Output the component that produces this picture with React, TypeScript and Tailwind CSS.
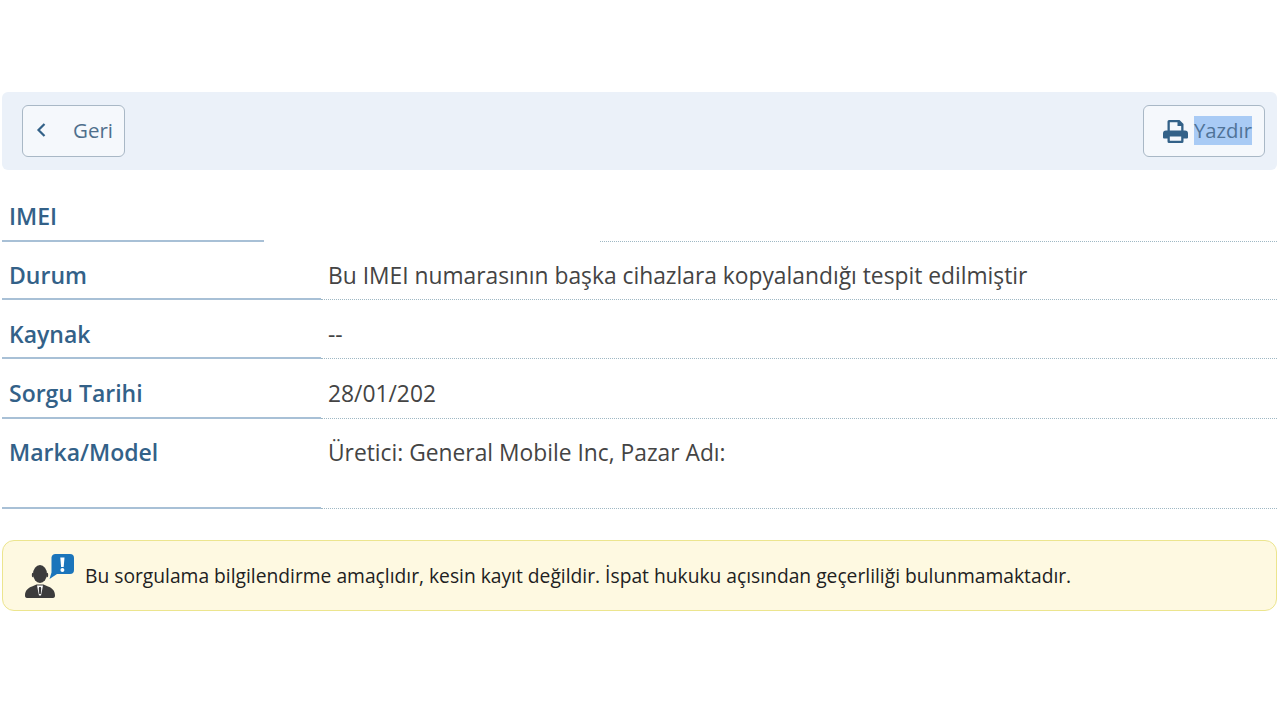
const rows = [
    { label: "Durum", value: "Bu IMEI numarasının başka cihazlara kopyalandığı tespit edilmiştir", box: "h-[58px] pt-[17px]" },
    { label: "Kaynak", value: "--", box: "h-[59px] pt-[18px]" },
    { label: "Sorgu Tarihi", value: "28/01/202", box: "h-[60px] pt-[18px]" },
    { label: "Marka/Model", value: "Üretici: General Mobile Inc, Pazar Adı:", box: "h-[90px] pt-[17px]" },
];

function PrinterIcon() {
    return (
        <svg width="25" height="23" viewBox="0 0 25 23" className="text-[#336188]">
            <path fill="currentColor" fillRule="evenodd" d="M6 0h10.500L20.500 4V10.500H22A3 3 0 0 1 25 13.500V17.500a1 1 0 0 1-1 1H20.500V21.500a1.500 1.500 0 0 1-1.500 1.500H6a1.500 1.500 0 0 1-1.500-1.500V18.500H1a1 1 0 0 1-1-1V13.500A3 3 0 0 1 3 10.500H4.500V1.500A1.500 1.500 0 0 1 6 0zM6.800 2.200V10.500H18.200V6H14.500V2.200zM6.800 16.500V20.800H18.200V16.500z" />
        </svg>
    );
}

function AgentIcon() {
    return (
        <svg width="50" height="46" viewBox="0 0 50 46">
            <path fill="#1b75bb" d="M26.500 4.500A4 4 0 0 1 30.500 1H45a4 4 0 0 1 4 4v12a4 4 0 0 1-4 4H32l-7.500 5 2-6.500z" />
            <path fill="#fff" d="M35.300 4.500h4.200l-.8 9.500h-2.600z" />
            <circle cx="37.400" cy="17" r="2" fill="#fff" />
            <ellipse cx="15" cy="21" rx="7" ry="9" fill="#3c3c3c" />
            <ellipse cx="7.800" cy="22" rx="1" ry="2.200" fill="#3c3c3c" />
            <ellipse cx="22.200" cy="22" rx="1" ry="2.200" fill="#3c3c3c" />
            <path fill="#3c3c3c" d="M2 45c-1.500 0-2-1-2-2.500 0-5 3-7.500 7-9l4.500-2h7l4.500 2c4 1.500 7 4 7 9 0 1.500-.5 2.500-2 2.500z" />
            <path fill="#fff" d="M12 32.500h6l-2 10h-2z" />
            <path fill="#3c3c3c" d="M14.200 34h1.600l.4 1.500-.4 5.500h-1.600l-.4-5.500z" />
        </svg>
    );
}

export default function App() {
    return (
        <div className="min-h-[720px] bg-white pt-[92px] px-[2px] font-['Open_Sans',sans-serif]">
            <div className="w-[1275px] h-[78px] bg-[#ebf1f9] rounded-md flex items-center justify-between pl-5 pr-3">
                <button className="w-[103px] h-[52px] flex items-center bg-[#f5f8fc] border border-[#a9b8c6] rounded-md pl-[13px] text-[#4f6f8c] text-[20.500px]">
                    <svg width="10" height="14" viewBox="0 0 10 14" fill="none" stroke="#336188" strokeWidth="2.200" className="mb-[2px]">
                        <path d="M8.500 1 L2.500 7 L8.500 13" />
                    </svg>
                    <span className="ml-[27px] mb-[2px]">Geri</span>
                </button>
                <button className="w-[122px] h-[52px] flex items-center bg-[#f5f8fc] border border-[#a9b8c6] rounded-md pl-[19px] gap-[6px] text-[#4f7398] text-[20.300px]">
                    <PrinterIcon />
                    <span className="bg-[#a9cbf5] leading-[29px] mb-[2px]">Yazdır</span>
                </button>
            </div>

            <div className="w-[1275px] text-[23px]">
                <div className="flex h-[72px]">
                    <div className="w-[262px] border-b-2 border-[#a8c0d6] pl-[7px] pt-[30px] font-semibold text-[#336188] leading-[32px]">IMEI</div>
                    <div className="ml-[336px] flex-1 border-b border-dotted border-[#9fb8c4]" />
                </div>
                {rows.map((row) => (
                    <div key={row.label} className="flex">
                        <div className={`w-[319px] shrink-0 border-b-2 border-[#a8c0d6] pl-[7px] font-semibold text-[#336188] leading-[32px] ${row.box}`}>{row.label}</div>
                        <div className={`flex-1 border-b border-dotted border-[#9fb8c4] pl-[7px] text-[#444444] text-[22.800px] leading-[33px] ${row.box}`}>{row.value}</div>
                    </div>
                ))}
            </div>

            <div className="w-[1275px] h-[71px] mt-[31px] bg-[#fef9e1] border border-[#ece58e] rounded-xl flex items-center pl-[22px] gap-[10px] text-[#212121] text-[19.240px]">
                <AgentIcon />
                <span className="pt-[1px]">Bu sorgulama bilgilendirme amaçlıdır, kesin kayıt değildir. İspat hukuku açısından geçerliliği bulunmamaktadır.</span>
            </div>
        </div>
    );
}
